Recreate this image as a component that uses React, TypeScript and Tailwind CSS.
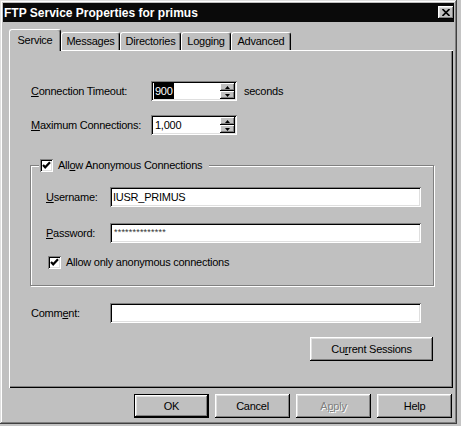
import React from "react";

const RAISED =
  "shadow-[inset_-1px_-1px_#000,inset_1px_1px_#fff,inset_-2px_-2px_#808080,inset_2px_2px_#dfdfdf]";
const SUNKEN =
  "shadow-[inset_1px_1px_#808080,inset_-1px_-1px_#fff,inset_2px_2px_#000,inset_-2px_-2px_#dfdfdf]";

function U({ children }: { children: React.ReactNode }) {
  return <span className="underline underline-offset-[1px]">{children}</span>;
}

function Check() {
  return (
    <div className="w-[13px] h-[13px] bg-white shrink-0 shadow-[inset_1px_1px_#808080,inset_-1px_-1px_#fff,inset_2px_2px_#000,inset_-2px_-2px_#dfdfdf] flex items-center justify-center">
      <svg width="9" height="9" viewBox="0 0 9 9">
        <path d="M1 4 L3.2 6.3 L8 1.2" stroke="#000" strokeWidth="2.2" fill="none" />
      </svg>
    </div>
  );
}

function Spinner() {
  return (
    <div className="flex flex-col w-[15px] h-[16px] mr-[2px] shrink-0">
      <div className="h-[8px] bg-[#c0c0c0] shadow-[inset_-1px_-1px_#000,inset_1px_1px_#fff,inset_-2px_-2px_#808080] flex items-center justify-center">
        <svg width="5" height="3" viewBox="0 0 5 3">
          <path d="M2.5 0 L5 3 L0 3 Z" fill="#000" />
        </svg>
      </div>
      <div className="h-[8px] bg-[#c0c0c0] shadow-[inset_-1px_-1px_#000,inset_1px_1px_#fff,inset_-2px_-2px_#808080] flex items-center justify-center">
        <svg width="5" height="3" viewBox="0 0 5 3">
          <path d="M0 0 L5 0 L2.5 3 Z" fill="#000" />
        </svg>
      </div>
    </div>
  );
}

function Tab({ label, w, selected }: { label: string; w: number; selected?: boolean }) {
  if (selected) {
    return (
      <div
        style={{ width: w }}
        className="relative z-10 h-[22px] mb-[-1px] bg-[#c0c0c0] border-t border-l border-white border-r border-r-black rounded-tl-[3px] rounded-tr-[3px] shadow-[inset_-1px_0_#808080] flex items-center justify-center pb-[1px]"
      >
        {label}
      </div>
    );
  }
  return (
    <div
      style={{ width: w }}
      className="h-[18px] bg-[#c0c0c0] border-t border-l border-white border-r border-r-black rounded-tl-[3px] rounded-tr-[3px] shadow-[inset_-1px_0_#808080] flex items-center justify-center"
    >
      {label}
    </div>
  );
}

function Btn({ children, w, def }: { children: React.ReactNode; w: number; def?: boolean }) {
  return (
    <div
      style={{ width: w }}
      className={
        def
          ? "h-[24px] border border-black flex items-center justify-center"
          : "h-[24px] flex items-center justify-center " + RAISED
      }
    >
      {def ? (
        <div className="w-full h-full flex items-center justify-center shadow-[inset_-1px_-1px_#000,inset_1px_1px_#fff,inset_-2px_-2px_#808080,inset_2px_2px_#dfdfdf]">
          {children}
        </div>
      ) : (
        children
      )}
    </div>
  );
}

export default function App() {
  return (
    <div className="w-[461px] h-[426px] bg-[#c4c4c4] text-black text-[11px] tracking-[-0.25px] leading-none font-['Liberation_Sans',Arial,sans-serif]">
      <div className="w-[457px] h-[424px] bg-[#c0c0c0] p-[3px] flex flex-col shadow-[inset_-1px_-1px_#404040,inset_1px_1px_#dfdfdf,inset_-2px_-2px_#808080,inset_2px_2px_#fff]">
        {/* Title bar */}
        <div className="h-[19px] bg-[#0a0a0a] flex items-center pl-[1px] pr-[0px]">
          <span className="text-white font-bold text-[12px] tracking-normal">FTP Service Properties for primus</span>
          <div className="ml-auto w-[16px] h-[13px] bg-[#c0c0c0] flex items-center justify-center shadow-[inset_-1px_-1px_#000,inset_1px_1px_#fff,inset_-2px_-2px_#808080,inset_2px_2px_#dfdfdf]">
            <svg width="8" height="7" viewBox="0 0 8 7">
              <path d="M0.5 0 L7.5 7 M7.5 0 L0.5 7" stroke="#000" strokeWidth="1.6" />
            </svg>
          </div>
        </div>

        {/* Tabs */}
        <div className="mt-[7px] ml-[6px] h-[21px] flex items-end">
          <Tab label="Service" w={52} selected />
          <Tab label="Messages" w={59} />
          <Tab label="Directories" w={61} />
          <Tab label="Logging" w={50} />
          <Tab label="Advanced" w={60} />
        </div>

        {/* Panel */}
        <div className="ml-[6px] w-[444px] h-[338px] flex flex-col pl-[22px] pt-[31px] shadow-[inset_1px_1px_#fff,inset_-1px_-1px_#000,inset_-2px_-2px_#808080]">
          <div className="flex items-center h-[20px]">
            <span className="w-[120px]">
              <U>C</U>onnection Timeout:
            </span>
            <div className={"w-[86px] h-[20px] bg-white flex items-center " + SUNKEN}>
              <span className="ml-[3px] h-[16px] px-[1px] bg-black text-white flex items-center">900</span>
              <div className="flex-1" />
              <Spinner />
            </div>
            <span className="ml-[7px]">seconds</span>
          </div>

          <div className="flex items-center h-[20px] mt-[14px]">
            <span className="w-[120px]">
              <U>M</U>aximum Connections:
            </span>
            <div className={"w-[86px] h-[20px] bg-white flex items-center " + SUNKEN}>
              <span className="ml-[4px]">1,000</span>
              <div className="flex-1" />
              <Spinner />
            </div>
          </div>

          {/* Group box */}
          <div className="relative mt-[30px] ml-[-1px] w-[404px] h-[121px] border border-[#808080] shadow-[1px_1px_0_#fff,inset_1px_1px_0_#fff] flex flex-col pl-[15px] pt-[21px]">
            <div className="absolute top-[-7px] left-[8px] bg-[#c0c0c0] flex items-center pl-[1px] pr-[7px] h-[13px]">
              <Check />
              <span className="ml-[5px]">
                All<U>o</U>w Anonymous Connections
              </span>
            </div>
            <div className="flex items-center h-[20px]">
              <span className="w-[64px]">
                <U>U</U>sername:
              </span>
              <div className={"w-[311px] h-[20px] bg-white flex items-center pl-[3px] " + SUNKEN}>IUSR_PRIMUS</div>
            </div>
            <div className="flex items-center h-[20px] mt-[16px]">
              <span className="w-[64px]">
                <U>P</U>assword:
              </span>
              <div className={"w-[311px] h-[20px] bg-white flex items-start pl-[4px] pt-[5px] text-[9px] tracking-[0.2px] text-[#333] " + SUNKEN}>
                **************
              </div>
            </div>
            <div className="flex items-center mt-[13px] ml-[2px]">
              <Check />
              <span className="ml-[5px]">Allow only anonymous connections</span>
            </div>
          </div>

          <div className="flex items-center h-[20px] mt-[17px]">
            <span className="w-[79px]">
              Comm<U>e</U>nt:
            </span>
            <div className={"w-[311px] h-[20px] bg-white " + SUNKEN} />
          </div>

          <div className="mt-[14px] ml-[279px]">
            <Btn w={123}>
              <span>
                Cu<U>r</U>rent Sessions
              </span>
            </Btn>
          </div>
        </div>

        {/* Bottom buttons */}
        <div className="mt-[6px] pl-[131px] flex gap-[6px]">
          <Btn w={75} def>
            OK
          </Btn>
          <Btn w={75}>Cancel</Btn>
          <Btn w={75}>
            <span className="text-[#808080] [text-shadow:1px_1px_0_#fff]">
              A<U>p</U>ply
            </span>
          </Btn>
          <Btn w={75}>Help</Btn>
        </div>
      </div>
    </div>
  );
}
